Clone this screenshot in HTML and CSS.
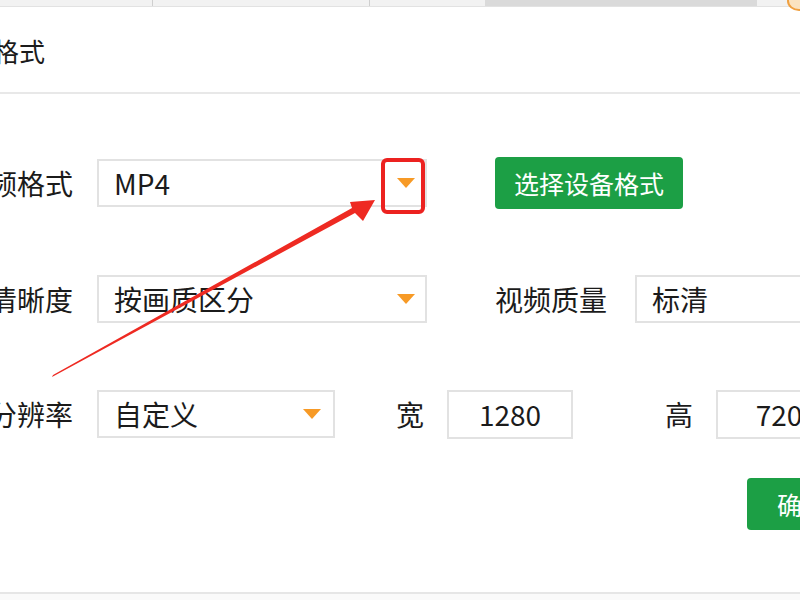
FILE: index.html
```html
<!doctype html>
<html>
<head>
<meta charset="utf-8">
<title>输出格式</title>
<link rel="stylesheet" href="styles.css">
</head>
<body>
<div class="topbar">
	<span class="tab t1"></span>
	<span class="tab t2"></span>
	<span class="tab t3"></span>
	<span class="tab t4"></span>
	<span class="tab t5"><i class="ring"></i></span>
</div>

<div class="head">
	<h2 class="title">输出格式</h2>
</div>

<div class="main">
	<div class="row">
		<label class="lbl">视频格式</label>
		<div class="select s1">
			<span>MP4</span>
			<i class="caret"></i>
			<b class="mark"></b>
		</div>
		<button class="btn">选择设备格式</button>
	</div>

	<div class="row">
		<label class="lbl">视频清晰度</label>
		<div class="select s1">
			<span>按画质区分</span>
			<i class="caret"></i>
		</div>
		<label class="lbl2">视频质量</label>
		<div class="select s2">
			<span>标清</span>
		</div>
	</div>

	<div class="row">
		<label class="lbl">视频分辨率</label>
		<div class="select s3">
			<span>自定义</span>
			<i class="caret"></i>
		</div>
		<label class="lbl3 lw">宽</label>
		<div class="input">1280</div>
		<label class="lbl3 lh">高</label>
		<div class="input">720</div>
	</div>

	<div class="foot">
		<button class="btn ok">确定</button>
	</div>
</div>

<div class="bottom"></div>

<svg class="arrow" width="800" height="600" viewBox="0 0 800 600">
	<polygon points="53,375 352,208 350,202 375,200 363,221 355,213 52,377" fill="#ee2a22"/>
</svg>
</body>
</html>
```

FILE: styles.css
```css
body,h2,button { margin:0; padding:0;}
body { width:800px; height:600px; overflow:hidden; background:#fff; color:#1b1b1b; font-family:"Noto Sans CJK SC","Microsoft YaHei",sans-serif; position:relative;}

.topbar { display:flex; height:6px; background:#f2f2f2; border-bottom:1px solid #e2e2e2;}
.tab { height:6px; border-right:1px solid #cfcfcf;}
.t1 { width:152px;}
.t2 { width:216px;}
.t3 { width:115px; border-right:none;}
.t4 { width:272px; background:#dadada; border-right:none;}
.t5 { flex:1; position:relative; border-right:none;}
.ring { position:absolute; left:30px; top:-9px; width:20px; height:16px; border-radius:50%; border:2px solid #f0a040; background:#fbe3c0;}

.head { height:85px; border-bottom:2px solid #e8e8e8; display:flex; align-items:center;}
.title { font-size:26px; font-weight:normal; margin-left:-59px; margin-top:2px;}

.main { padding-top:63px;}
.row { display:flex; align-items:center; height:52px; margin-bottom:64px;}
.row + .row { margin-bottom:0;}
.row:nth-child(2) { margin-bottom:63px;}

.lbl { width:160px; margin-left:-87px; text-align:right; font-size:28px; flex-shrink:0;}
.lbl2 { margin-left:68px; font-size:28px; flex-shrink:0;}
.lbl3 { font-size:28px; flex-shrink:0;}
.lw { margin-left:61px;}
.lh { margin-left:92px;}

.select { position:relative; display:flex; align-items:center; height:48px; margin-left:24px; border:2px solid #e2e2e2; box-sizing:border-box; padding-left:15px; font-size:28px; flex-shrink:0;}
.s1 { width:330px;}
.s2 { width:200px; margin-left:28px;}
.s3 { width:238px;}
.s3 .caret { margin-right:12px;}
.caret { margin-left:auto; margin-right:10px; width:0; height:0; border-left:9px solid transparent; border-right:9px solid transparent; border-top:10px solid #f79a26;}
.mark { position:absolute; right:0; top:-3px; width:44px; height:56px; border:4px solid #ec2220; border-radius:6px; box-sizing:border-box;}

.input { width:126px; height:49px; margin-left:23px; border:2px solid #e2e2e2; box-sizing:border-box; font-size:28px; display:flex; align-items:center; justify-content:center; flex-shrink:0;}

.btn { height:52px; padding:0 19px; margin-left:68px; background:#1c9f45; color:#fff; border:none; border-radius:4px; font-size:25px; font-family:inherit; flex-shrink:0;}
.foot { display:flex; margin-top:38px;}
.ok { margin-left:747px; width:110px; padding:0 30px; text-align:left;}

.bottom { position:absolute; left:0; top:592px; width:800px; height:8px; border-top:2px solid #e6e6e6; background:#fafafa;}
.arrow { position:absolute; left:0; top:0;}
```
